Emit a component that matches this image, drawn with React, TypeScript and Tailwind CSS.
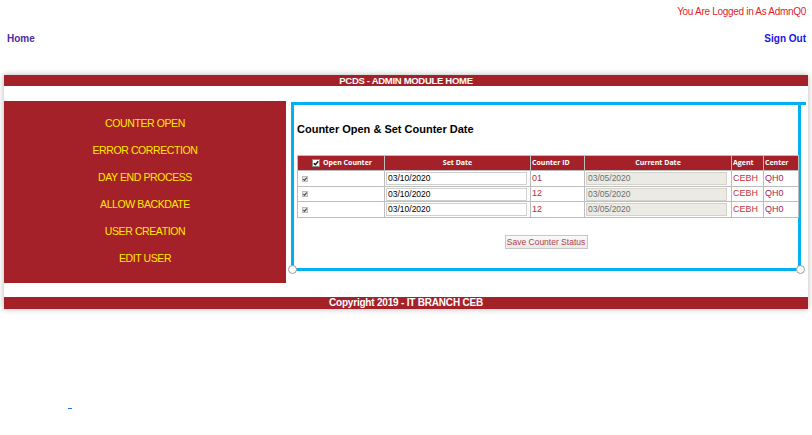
import React from 'react';

const RED = 'bg-[#a52129]';

const menu = ['COUNTER OPEN', 'ERROR CORRECTION', 'DAY END PROCESS', 'ALLOW BACKDATE', 'USER CREATION', 'EDIT USER'];

const rows = [
  { id: '01', setDate: '03/10/2020', current: '03/05/2020', agent: 'CEBH', center: 'QH0' },
  { id: '12', setDate: '03/10/2020', current: '03/05/2020', agent: 'CEBH', center: 'QH0' },
  { id: '12', setDate: '03/10/2020', current: '03/05/2020', agent: 'CEBH', center: 'QH0' },
];

const Check = ({ header }: { header?: boolean }) => (
  <svg width={header ? 8 : 6} height={header ? 8 : 6} viewBox="0 0 8 8" className="shrink-0">
    <rect x="0.5" y="0.5" width="7" height="7" fill={header ? '#ffffff' : '#e4e4e4'} stroke={header ? '#8a8a8a' : '#b0b0b0'} />
    <path d="M1.8 4.2 L3.3 5.8 L6.3 2.2" fill="none" stroke={header ? '#111' : '#444'} strokeWidth="1.4" />
  </svg>
);

const CounterTable = () => (
  <table className="ml-[3px] w-[501px] table-fixed border-collapse border border-[#bdbdbd] font-['Open_Sans',sans-serif]">
    <colgroup>
      <col className="w-[87px]" />
      <col className="w-[146px]" />
      <col className="w-[54px]" />
      <col className="w-[147px]" />
      <col className="w-[32px]" />
      <col className="w-[35px]" />
    </colgroup>
    <thead>
      <tr className={`${RED} h-[15px] text-[7px] font-bold text-white`}>
        <th className="border border-[#bdbdbd] p-0">
          <div className="flex items-center justify-center gap-[3px] pl-[2px]">
            <Check header />
            <span>Open Counter</span>
          </div>
        </th>
        <th className="border border-[#bdbdbd] p-0">Set Date</th>
        <th className="border border-[#bdbdbd] p-0 pl-[1px] text-left">Counter ID</th>
        <th className="border border-[#bdbdbd] p-0">Current Date</th>
        <th className="border border-[#bdbdbd] p-0 pl-[1px] text-left">Agent</th>
        <th className="border border-[#bdbdbd] p-0 pl-[1px] text-left">Center</th>
      </tr>
    </thead>
    <tbody className="font-['Liberation_Sans',Arial,sans-serif] text-[9px]">
      {rows.map((r, i) => (
        <tr key={i} className={i === 1 ? 'h-[15px]' : 'h-[16px]'}>
          <td className="border border-[#bdbdbd] p-0 pl-[4px]">
            <Check />
          </td>
          <td className="border border-[#bdbdbd] p-0 pl-[1px]">
            <div className="flex h-[13px] w-[141px] items-center border border-[#cfcfcf] bg-white pl-[1px] text-[8.5px] text-black">
              {r.setDate}
            </div>
          </td>
          <td className="border border-[#bdbdbd] p-0 pl-[1px] text-[#b3313a]">{r.id}</td>
          <td className="border border-[#bdbdbd] p-0 pl-[1px]">
            <div className="flex h-[13px] w-[141px] items-center border border-[#d3d3cc] bg-[#ebebe4] pl-[1px] text-[8.5px] text-[#6d6d6d]">
              {r.current}
            </div>
          </td>
          <td className="border border-[#bdbdbd] p-0 pl-[1px] text-[#c0343e]">{r.agent}</td>
          <td className="border border-[#bdbdbd] p-0 pl-[1px] text-[#a3245a]">{r.center}</td>
        </tr>
      ))}
    </tbody>
  </table>
);

export default function App() {
  return (
    <div className="relative h-[435px] w-[812px] overflow-hidden bg-white font-['Liberation_Sans',Arial,sans-serif]">
      <div className="flex justify-end pr-[6px] pt-[5px] text-[10px] leading-[14px] tracking-[-0.3px] text-[#e0242b]">
        You Are Logged in As AdmnQ0
      </div>
      <div className="mt-[13px] flex justify-between px-[6px] text-[10px] font-bold leading-[14px]">
        <span className="pl-[1px] text-[#4f2a9e]">Home</span>
        <span className="text-[#1515e6]">Sign Out</span>
      </div>

      <div className="mx-[4px] mt-[29px] bg-white shadow-[0_0_6px_rgba(0,0,0,0.3)]">
        <div className={`${RED} h-[11px] text-center text-[9.5px] font-bold leading-[11px] tracking-[-0.3px] text-white`}>
          PCDS - ADMIN MODULE HOME
        </div>

        <div className="flex pt-[15px]">
          <div className={`${RED} flex h-[182px] w-[282px] flex-col items-center pt-[9px]`}>
            {menu.map((m) => (
              <div key={m} className="text-[10.5px] leading-[27px] tracking-[-0.4px] text-[#ffea00]">
                {m}
              </div>
            ))}
          </div>

          <div className="relative ml-[5px] mt-[1px] h-[169px] w-[510px] border-[3px] border-[#00b0f0]">
            <span className="absolute right-[-8px] top-[-3px] h-[3px] w-[5px] bg-[#00b0f0]" />
            <h2 className="mt-[18px] pl-[3px] text-[11px] font-bold leading-[13px] text-black">
              Counter Open &amp; Set Counter Date
            </h2>
            <div className="mt-[19px]">
              <CounterTable />
            </div>
            <div className="mt-[17px] flex justify-center">
              <button className="h-[14px] w-[83px] whitespace-nowrap border border-[#c6c6c6] bg-gradient-to-b from-[#fafafa] to-[#e9e9e9] p-0 text-[8.5px] leading-[12px] text-[#b0434a]">
                Save Counter Status
              </button>
            </div>
            <span className="absolute bottom-[-6px] left-[-6px] h-[9px] w-[9px] rounded-full border-[1.5px] border-[#9a9a9a] bg-white" />
            <span className="absolute bottom-[-6px] right-[-7px] h-[9px] w-[9px] rounded-full border-[1.5px] border-[#9a9a9a] bg-white" />
          </div>
        </div>

        <div className="mt-[14px] h-[12px] bg-[#a52129] text-center text-[10px] font-bold leading-[12px] tracking-[-0.2px] text-white">
          Copyright 2019 - IT BRANCH CEB
        </div>
      </div>

      <div className="ml-[68px] mt-[99px] h-px w-[4px] bg-[#1a73e8]" />
    </div>
  );
}
